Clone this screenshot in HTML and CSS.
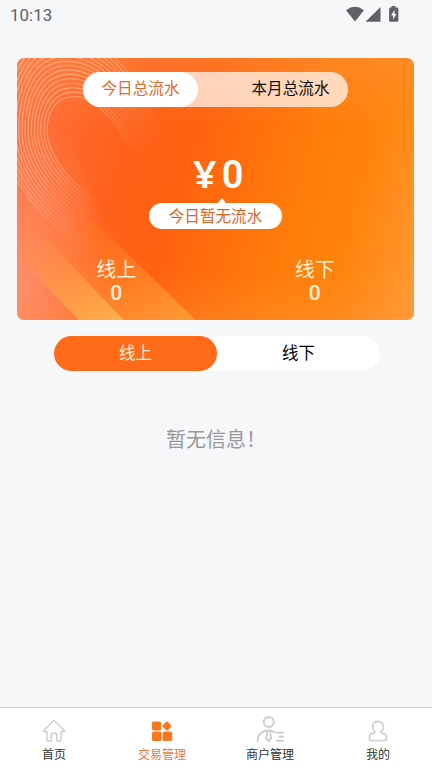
FILE: index.html
```html
<!DOCTYPE html>
<html lang="zh-CN">
<head>
<meta charset="utf-8">
<title>交易管理</title>
<link rel="stylesheet" href="styles.css">
</head>
<body>
<header class="status">
  <span class="time">10:13</span>
  <svg class="status-icons" width="56" height="18" viewBox="0 0 56 18">
    <path d="M0 4.3Q9-2.6 18 4.3L9 15.6Z"/>
    <path d="M34.500 1v14.800H19.500Z"/>
    <path fill-rule="evenodd" d="M45.500 0h4v1.500H51q1.400 0 1.400 1.400v11.500q0 1.400-1.400 1.400h-6.500q-1.400 0-1.400-1.400V2.900q0-1.400 1.400-1.400h1zM48.600 3.800l-3.500 5.800h2v4l3.400-5.700h-1.900z"/>
  </svg>
</header>
<main>
  <section class="card">
    <svg class="card-art" viewBox="17 57.500 397 262" preserveAspectRatio="none">
      <defs>
        <linearGradient id="beam" x1="20" y1="200" x2="115" y2="325" gradientUnits="userSpaceOnUse">
          <stop offset=".2" stop-color="#ff9a4c" stop-opacity="0"/><stop offset="1" stop-color="#ffb650" stop-opacity=".9"/>
        </linearGradient>
        <linearGradient id="beam2" x1="70" y1="195" x2="170" y2="325" gradientUnits="userSpaceOnUse">
          <stop offset="0" stop-color="#ff8a2c" stop-opacity="0"/><stop offset="1" stop-color="#ffa63c" stop-opacity=".9"/>
        </linearGradient>
        <linearGradient id="fade" x1="45" y1="90" x2="150" y2="160" gradientUnits="userSpaceOnUse">
          <stop offset="0" stop-color="#ffd0b0" stop-opacity=".6"/><stop offset=".4" stop-color="#ffc6a0" stop-opacity=".5"/><stop offset=".95" stop-color="#ffb080" stop-opacity="0"/>
        </linearGradient>
      </defs>
      <path fill="url(#beam2)" d="M17 145L196 320H80L17 250Z" opacity=".75"/>
      <path fill="url(#beam)" d="M17 207L124 320H79L17 255Z"/>
      <g id="rings" fill="none" stroke="url(#fade)" stroke-width="1.100"></g>
    </svg>
    <div class="period">
      <span class="period-tab active">今日总流水</span>
      <span class="period-tab">本月总流水</span>
    </div>
    <div class="amount"><span class="yen">¥</span>0</div>
    <div class="bubble">今日暂无流水</div>
    <div class="totals">
      <div>线上<b>0</b></div>
      <div>线下<b>0</b></div>
    </div>
  </section>
  <div class="switch"><span class="on">线上</span><span>线下</span></div>
  <p class="empty">暂无信息！</p>
</main>
<nav class="tabs">
  <div class="tab">
    <svg width="26" height="28" viewBox="0 0 26 28"><path d="M6 14.500H2.800q-.8-.3-.2-1.100L13 3.600l10.400 9.800q.6.800-.2 1.100H20v8.300q0 1.200-1.200 1.200h-3.100v-6.500q0-1.200-1.200-1.200h-3q-1.200 0-1.200 1.200V24H7.200Q6 24 6 22.800Z"/></svg>
    首页
  </div>
  <div class="tab current">
    <svg width="26" height="28" viewBox="0 0 26 28"><rect x="3" y="4.500" width="9" height="9" rx="1.500"/><rect x="3" y="14.500" width="9.500" height="9.500" rx="1.500"/><rect x="13.700" y="14.500" width="9.500" height="9.500" rx="1.500"/><path d="M17.200 4.800q.7-.6 1.400 0l3.500 3.500q.6.700 0 1.400l-3.500 3.500q-.7.600-1.400 0l-3.500-3.500q-.6-.7 0-1.400z"/></svg>
    交易管理
  </div>
  <div class="tab">
    <svg width="30" height="28" viewBox="0 0 30 28"><g stroke-width="1.900"><circle cx="13.700" cy="5" r="5"/><path d="M2.500 24.300C3 17 7 13.500 13.700 13.500q3.200 0 6 1.900M12.300 13.700l-1 7.400 2.400 3 2.400-3-1.200-7.400M22 15.800h6M24.500 19.800h3.500M22 23.700h6"/></g></svg>
    商户管理
  </div>
  <div class="tab">
    <svg width="26" height="28" viewBox="0 0 26 28"><path stroke-width="1.700" d="M9.800 14.300C6.200 11.500 7 4.300 13 4.300s6.800 7.200 3.200 10q-.5 1.200.8 1.700l2.800 1.100q1.500.7 1.500 2.700v2.500q0 1.200-1.200 1.200h-14.400q-1.200 0-1.200-1.200v-2.500q0-2 1.500-2.700L9 16q1.300-.5.8-1.700Z"/></svg>
    我的
  </div>
</nav>
<script src="rings.js"></script>
</body>
</html>
```
FILE: styles.css
```css
* { box-sizing: border-box; }
body {
  margin: 0;
  height: 768px;
  display: flex;
  flex-direction: column;
  background: #f5f7f9;
  color: #000;
  font-family: Roboto, "Noto Sans CJK SC", sans-serif;
  overflow: hidden;
}
.status {
  height: 57.5px;
  padding: 6px 30px 0 10px;
  display: flex;
  justify-content: space-between;
  align-items: flex-start;
  color: #5f6063;
}
.time { font-size: 16.8px; line-height: 19px; letter-spacing: .1px; }
.status-icons { fill: #606164; width: 56px; }
main { flex: 1; }
.card {
  position: relative;
  width: 397px;
  height: 262px;
  margin-left: 17px;
  border-radius: 7px;
  overflow: hidden;
  display: flex;
  flex-direction: column;
  align-items: center;
  color: #fff;
  background:
    radial-gradient(ellipse 95px 170px at 0 85%, rgba(255, 150, 118, .85) 0, rgba(255, 115, 65, 0) 100%),
    linear-gradient(180deg, rgba(255, 150, 80, .35) 0, rgba(255, 120, 40, 0) 25%, rgba(255, 120, 40, 0) 82%, rgba(255, 150, 60, .3) 100%),
    linear-gradient(105deg, #ff7346 0, #ff6a30 14%, #ff611a 28%, #ff6210 42%, #ff6c0d 52%, #ff7d0b 68%, #ff850f 83%, #ff9c38 100%);
}
.card-art { position: absolute; inset: 0; width: 100%; height: 100%; }
.card > div { position: relative; }
.period {
  width: 265px;
  height: 35px;
  margin: 14.5px 0 0;
  border-radius: 18px;
  display: flex;
  justify-content: space-between;
  background: rgba(255, 255, 255, .7);
}
.period-tab {
  width: 115px;
  font-size: 15.6px;
  line-height: 35px;
  text-align: center;
  color: #120a04;
  border-radius: 18px;
}
.period-tab.active { background: #fff; color: #dd6c2c; }
.amount {
  height: 44px;
  margin: 44.5px 0 0 7px;
  font-size: 38px;
  line-height: 44px;
  font-weight: 600;
  display: flex;
  align-items: baseline;
  gap: 6px;
}
.yen { font-family: "Noto Sans", sans-serif; font-size: 37.5px; line-height: 44px; transform: scaleX(1.1); }
.bubble {
  width: 133px;
  height: 26px;
  margin-top: 7.5px;
  border-radius: 13px;
  background: #fff;
  color: #d9662d;
  font-size: 15.6px;
  line-height: 28px;
  text-align: center;
}
.bubble::before {
  content: "";
  position: absolute;
  left: 69px;
  top: -5px;
  border: 4px solid transparent;
  border-top: 0;
  border-bottom: 5px solid #fff;
}
.totals {
  width: 100%;
  margin-top: 29px;
  display: grid;
  grid-template-columns: 1fr 1fr;
  text-align: center;
  color: #fff2d8;
  font-size: 20px;
  line-height: 24px;
}
.totals b { display: block; font-weight: 500; font-size: 21px; line-height: 23px; }
.switch {
  width: 326px;
  height: 35px;
  margin: 16px 0 0 54px;
  display: flex;
  border-radius: 18px;
  background: #fff;
}
.switch span {
  flex: 1;
  border-radius: 18px;
  text-align: center;
  font-size: 16.5px;
  line-height: 35px;
}
.switch .on { background: #ff6b18; color: #fff0dc; }
.empty { margin: 55px 0 0 166px; font-size: 20px; line-height: 29px; color: #999; }
.tabs {
  height: 61px;
  border-top: 1px solid #cfcfcf;
  background: #fff;
  display: grid;
  grid-template-columns: repeat(4, 1fr);
}
.tab {
  display: flex;
  flex-direction: column;
  align-items: center;
  gap: 1px;
  padding-top: 9px;
  font-size: 12px;
  line-height: 18px;
  color: #333;
}
.tab svg { overflow: visible; fill: none; stroke: #cecece; stroke-width: 1.4; stroke-linecap: round; stroke-linejoin: round; }
.tab.current { color: #e87846; }
.tab.current svg { fill: #fb761f; stroke: none; }
```
FILE: rings.js
```js
// Draws the decorative loops by blending from the inner to the outer curve.
const inner = [129, 146, 115, 121, 96, 96, 75, 96, 53, 96, 47, 116, 47, 130, 47, 152, 66, 178, 95, 199];
const outer = [172, 150, 142, 82, 110, 34, 60, 34, 15, 34, 3, 90, 3, 130, 3, 180, 45, 225, 100, 256];
const group = document.getElementById("rings");
const count = 14;
for (let i = 0; i <= count; i++) {
  const p = inner.map((v, k) => (v + (outer[k] - v) * i / count).toFixed(1));
  const path = document.createElementNS("http://www.w3.org/2000/svg", "path");
  path.setAttribute("d", `M${p.slice(0, 2)}C${p.slice(2)}`);
  group.appendChild(path);
}
```
